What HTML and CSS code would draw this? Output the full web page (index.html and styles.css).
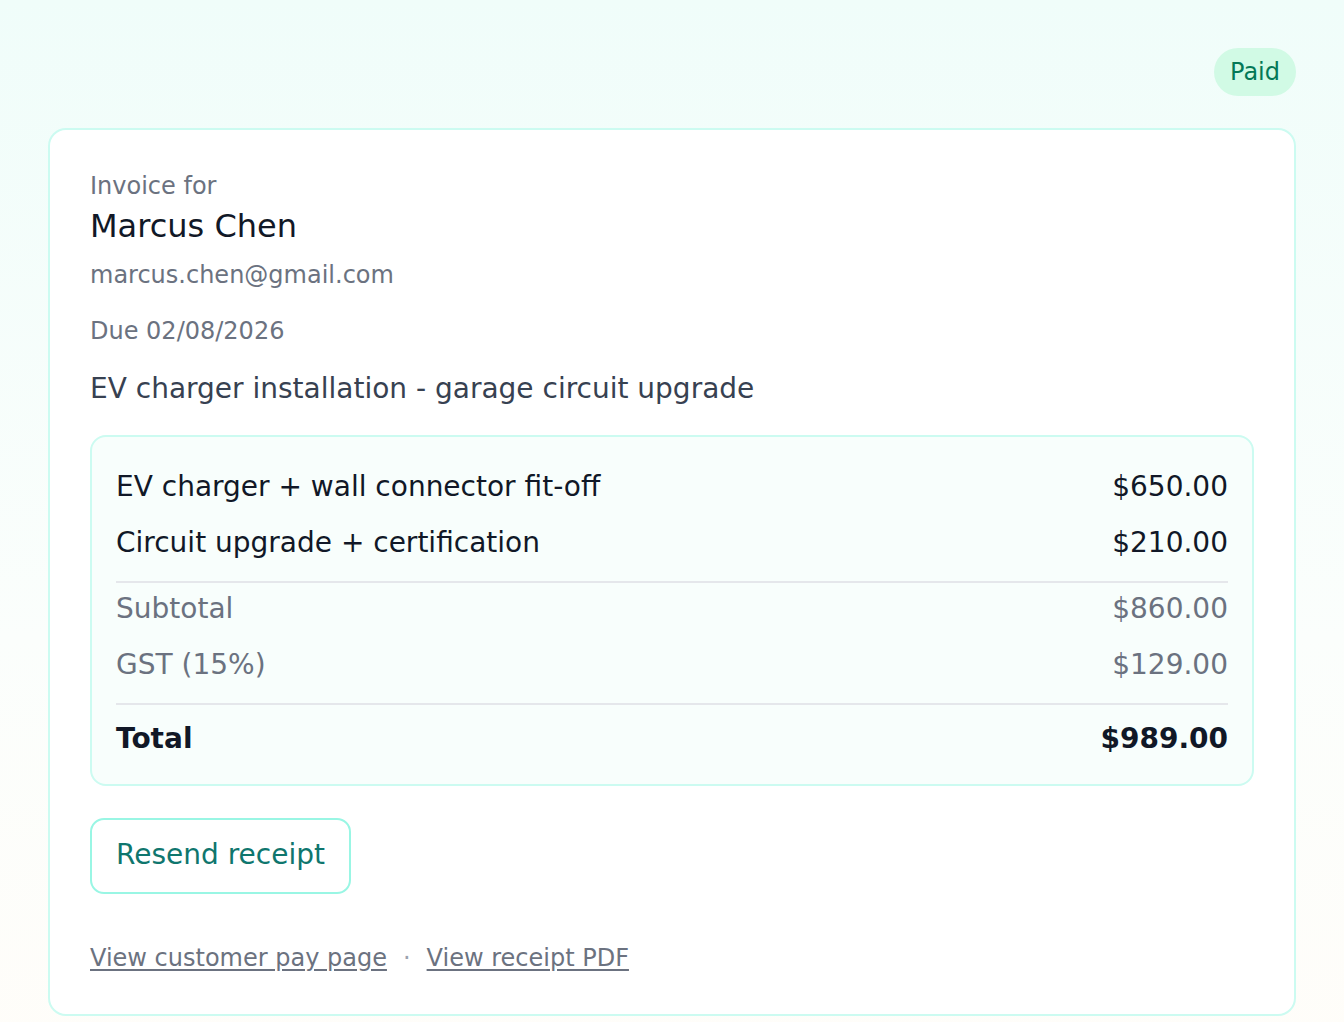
FILE: index.html
```html
<!DOCTYPE html>
<html lang="en">
<head>
<meta charset="utf-8">
<title>Invoice</title>
<link rel="stylesheet" href="styles.css">
</head>
<body>
<div class="page">
  <div class="topbar">
    <span class="pill">Paid</span>
  </div>
  <section class="card">
    <div class="label">Invoice for</div>
    <div class="name">Marcus Chen</div>
    <div class="email">marcus.chen@gmail.com</div>
    <div class="due">Due 02/08/2026</div>
    <div class="desc">EV charger installation - garage circuit upgrade</div>
    <div class="lines">
      <div class="row item first"><span>EV charger + wall connector fit-off</span><span>$650.00</span></div>
      <div class="row item"><span>Circuit upgrade + certification</span><span>$210.00</span></div>
      <div class="rule"></div>
      <div class="row muted first-after"><span>Subtotal</span><span>$860.00</span></div>
      <div class="row muted"><span>GST (15%)</span><span>$129.00</span></div>
      <div class="rule"></div>
      <div class="row total"><span>Total</span><span>$989.00</span></div>
    </div>
    <button class="resend" type="button">Resend receipt</button>
    <div class="links">
      <a href="#" class="link">View customer pay page</a>
      <span class="dot">·</span>
      <a href="#" class="link">View receipt PDF</a>
    </div>
  </section>
</div>
</body>
</html>
```
FILE: styles.css
```css
* { box-sizing: border-box; }
html, body { margin: 0; padding: 0; }
body {
  font-family: "DejaVu Sans", Verdana, sans-serif;
  background: linear-gradient(180deg, #f0fdfa 0%, #fbfefc 60%, #fffdf9 100%);
  min-height: 1022px;
  color: #111827;
}
.page {
  padding: 48px 48px 48px;
}
.topbar {
  display: flex;
  justify-content: flex-end;
  height: 48px;
}
.pill {
  display: inline-block;
  background: #d1fae5;
  color: #047857;
  font-size: 24px;
  line-height: 32px;
  padding: 8px 16px;
  border-radius: 24px;
}
.card {
  margin-top: 32px;
  background: #ffffff;
  border: 2px solid #ccfbf1;
  border-radius: 18px;
  padding: 40px 40px 40px;
  display: flex;
  flex-direction: column;
  align-items: flex-start;
}
.label {
  font-size: 24px;
  line-height: 32px;
  color: #6b7280;
}
.name {
  font-size: 32px;
  line-height: 48px;
  color: #111827;
}
.email {
  margin-top: 9px;
  font-size: 24px;
  line-height: 32px;
  color: #6b7280;
}
.due {
  margin-top: 24px;
  font-size: 24px;
  line-height: 32px;
  color: #6b7280;
}
.desc {
  margin-top: 22px;
  font-size: 28px;
  line-height: 40px;
  color: #374151;
}
.lines {
  align-self: stretch;
  margin-top: 26px;
  background: #f8fefc;
  border: 2px solid #ccfbf1;
  border-radius: 16px;
  padding: 29px 24px 24px;
  display: flex;
  flex-direction: column;
}
.row {
  display: flex;
  justify-content: space-between;
  font-size: 28px;
  line-height: 42px;
}
.item { color: #111827; margin-top: 14px; }
.item.first { margin-top: 0; }
.muted { color: #6b7280; margin-top: 14px; }
.muted.first-after { margin-top: 5px; }
.rule {
  height: 2px;
  background: #e5e7eb;
  margin-top: 17px;
}
.rule + .total { margin-top: 13px; }
.total {
  font-weight: bold;
  color: #111827;
}
.resend {
  margin-top: 32px;
  font-family: "DejaVu Sans", Verdana, sans-serif;
  font-size: 28px;
  line-height: 40px;
  color: #0f766e;
  background: #ffffff;
  border: 2px solid #99f6e4;
  border-radius: 14px;
  padding: 15px 24px 17px;
  cursor: pointer;
}
.links {
  margin-top: 48px;
  display: flex;
  align-items: center;
  gap: 16px;
  font-size: 24px;
  line-height: 32px;
}
.link {
  color: #6b7280;
  text-decoration: underline;
  text-underline-offset: 3px;
}
.dot { color: #9ca3af; }
```
